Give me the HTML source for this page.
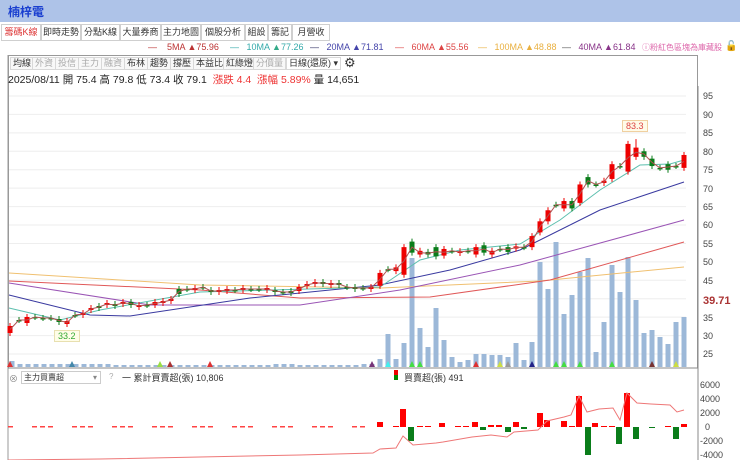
<!DOCTYPE html><html><head><meta charset="utf-8"><style>
*{margin:0;padding:0;box-sizing:border-box}
body{width:740px;height:460px;overflow:hidden;background:#fff;font-family:"Liberation Sans","Noto Sans CJK TC",sans-serif;position:relative}
.top{position:absolute;left:0;top:0;width:740px;height:22px;background:#aec3e8}
.top span{position:absolute;left:8px;top:3px;color:#1a3fd0;font-weight:bold;font-size:12px}
.tabs{position:absolute;left:0;top:22px;width:740px;height:20px;background:#fff}
.tab{position:absolute;top:2px;height:17px;border:1px solid #cfcfcf;font-size:9px;line-height:15px;text-align:center;color:#333;background:#fff}
.leg{position:absolute;top:42px;font-size:9px;white-space:nowrap}
.tb{position:absolute;top:57px;height:13px;border:1px solid #d8d8d8;font-size:9px;line-height:11px;padding:0 2px;color:#333;background:#f8f8f8}
.tb.g{color:#aaa}
.info{position:absolute;left:8px;top:72px;font-size:10.5px;color:#222;white-space:nowrap}
.ax{position:absolute;left:703px;font-size:9px;color:#444}
.ax2{position:absolute;font-size:9px;color:#444;left:700px}
</style></head><body>
<div class="top"><span>楠梓電</span></div>
<div class="tabs">
<div class="tab" style="left:1px;width:40px;color:#d33">籌碼K線</div>
<div class="tab" style="left:41px;width:40px">即時走勢</div>
<div class="tab" style="left:81px;width:39px">分點K線</div>
<div class="tab" style="left:120px;width:41px">大量券商</div>
<div class="tab" style="left:161px;width:40px">主力地圖</div>
<div class="tab" style="left:201px;width:44px">個股分析</div>
<div class="tab" style="left:245px;width:23px">組設</div>
<div class="tab" style="left:268px;width:24px">籌記</div>
<div class="tab" style="left:292px;width:38px">月營收</div>
</div>
<div class="leg" style="left:148px;color:#b33">—&nbsp;&nbsp;&nbsp; 5MA ▲75.96</div>
<div class="leg" style="left:230px;color:#3aa">—&nbsp;&nbsp; 10MA <span style="color:#3a8">▲</span>77.26</div>
<div class="leg" style="left:310px;color:#336">—&nbsp;&nbsp; <span style="color:#44a">20MA ▲71.81</span></div>
<div class="leg" style="left:395px;color:#d44">—&nbsp;&nbsp; 60MA ▲55.56</div>
<div class="leg" style="left:478px;color:#e9b040">—&nbsp;&nbsp; 100MA ▲48.88</div>
<div class="leg" style="left:562px;color:#555">—&nbsp;&nbsp; <span style="color:#838">40MA ▲61.84</span></div>
<div class="leg" style="left:642px;color:#d6a;font-size:8px">ⓘ粉紅色區塊為庫藏股</div>
<div class="leg" style="left:725px;top:41px;font-size:10px">🔓</div>
<div style="position:absolute;left:8px;top:55px;width:690px;height:313px;border:1px solid #999;border-bottom:none"></div>
<div class="tb" style="left:10px">均線</div><div class="tb g" style="left:32px">外資</div><div class="tb g" style="left:55px">投信</div><div class="tb g" style="left:78px">主力</div><div class="tb g" style="left:101px">融資</div><div class="tb" style="left:124px">布林</div><div class="tb" style="left:147px">趨勢</div><div class="tb" style="left:170px">撐壓</div><div class="tb" style="left:193px">本益比</div><div class="tb" style="left:223px">紅綠燈</div><div class="tb g" style="left:253px">分價量</div>
<div class="tb" style="left:286px;width:55px;background:#fff">日線(還原)&nbsp;▾</div>
<div style="position:absolute;left:344px;top:55px;font-size:13px;color:#333">⚙</div>
<div class="info">2025/08/11 開 75.4 高 79.8 低 73.4 收 79.1 &nbsp;<span style="color:#e33">漲跌 4.4 &nbsp;漲幅 5.89%</span> 量 14,651</div>
<svg id="sv" width="740" height="460" style="position:absolute;left:0;top:0"></svg>
<div class="ax" style="top:91px">95</div><div class="ax" style="top:110px">90</div><div class="ax" style="top:128px">85</div><div class="ax" style="top:147px">80</div><div class="ax" style="top:165px">75</div><div class="ax" style="top:184px">70</div><div class="ax" style="top:202px">65</div><div class="ax" style="top:220px">60</div><div class="ax" style="top:239px">55</div><div class="ax" style="top:257px">50</div><div class="ax" style="top:276px">45</div><div class="ax" style="top:313px">35</div><div class="ax" style="top:331px">30</div><div class="ax" style="top:349px">25</div>
<div class="ax" style="top:295px;font-size:11px;color:#a33;font-weight:bold">39.71</div>
<div style="position:absolute;left:622px;top:120px;border:1px solid #f0d0a0;background:#fffbe8;color:#d44;font-size:9px;padding:0 3px">83.3</div>
<div style="position:absolute;left:54px;top:330px;border:1px solid #e8e0b0;background:#fffde8;color:#3a3;font-size:9px;padding:0 3px">33.2</div>
<div style="position:absolute;left:9px;top:372px;font-size:9px;color:#888">⊗</div>
<div style="position:absolute;left:21px;top:371px;width:80px;height:13px;border:1px solid #ccc;font-size:8px;line-height:11px;padding-left:2px;color:#333">主力買賣超<span style="float:right;padding-right:3px;color:#888">▾</span></div>
<div style="position:absolute;left:109px;top:372px;font-size:8px;color:#aaa">?</div>
<div style="position:absolute;left:122px;top:371px;font-size:9px;color:#333">一 累計買賣超(張) 10,806</div>
<div style="position:absolute;left:394px;top:370px;width:4px;height:5px;background:#e00"></div><div style="position:absolute;left:394px;top:375px;width:4px;height:5px;background:#080"></div>
<div style="position:absolute;left:404px;top:371px;font-size:9px;color:#333">買賣超(張) 491</div>
<div class="ax2" style="top:380px">6000</div><div class="ax2" style="top:394px">4000</div><div class="ax2" style="top:408px">2000</div><div class="ax2" style="top:422px;left:705px">0</div><div class="ax2" style="top:436px">-2000</div><div class="ax2" style="top:450px">-4000</div>
<script>
var s='';function Y(p){return 96+(95-p)*3.686}
for(var p=95;p>=25;p-=5)s+='<line x1="9" x2="686" y1="'+Y(p)+'" y2="'+Y(p)+'" stroke="#eee"/>';
s+='<line x1="698" x2="698" y1="86" y2="460" stroke="#888"/><line x1="8" x2="8" y1="55" y2="460" stroke="#999"/><line x1="8" x2="698" y1="368" y2="368" stroke="#888"/>';
var vl=[[380,359],[388,334],[396,359],[404,343],[412,258],[420,328],[428,347],[436,308],[444,340],[452,357],[460,362],[468,360],[476,354],[484,354],[492,355],[500,355],[508,357],[516,343],[524,360],[532,342],[540,262],[548,289],[556,242],[564,314],[572,295],[580,272],[588,258],[596,352],[604,322],[612,265],[620,292],[628,257],[636,300],[644,333],[652,330],[660,337],[668,344],[676,322],[684,317]];
for(var x=12;x<380;x+=8){var h=(x<110||x>270&&x<300||x>360)?2+((x*7)%4):1;if(x<20)h=5;vl.push([x,366-h]);}
vl.forEach(function(v){s+='<rect x="'+(v[0]-2.5)+'" y="'+v[1]+'" width="5" height="'+(367-v[1])+'" fill="#9cb8d8"/>'});
function pl(pts,c){s+='<polyline fill="none" stroke="'+c+'" stroke-width="1" points="'+pts+'"/>'}
pl('9,273 200,285 380,288 540,281 684,267','#f0c070');
pl('9,281 200,290 300,298 430,297 550,280 684,242','#e05858');
pl('9,283 150,305 300,305 400,290 520,265 684,220','#9a55b5');
pl('9,295 90,315 130,316 250,298 380,285 450,270 520,250 600,210 684,182','#3a3aa0');
pl('9,308 60,320 100,310 200,292 380,287 420,260 460,250 520,244 560,220 600,190 640,165 670,164 684,160','#5cbfae');
var L=[[10,326,333,'r'],[19,320,320,'x'],[27,317,323,'r'],[35,317,317,'x'],[43,318,318,'x'],[51,318,318,'x'],[59,319,322,'g'],[67,321,324,'r'],[75,315,315,'x'],[83,313,315,'r'],[91,308,310,'r'],[99,306,308,'g'],[107,303,305,'r'],[115,304,306,'g'],[123,302,304,'r'],[131,302,305,'g'],[139,305,307,'r'],[147,305,305,'x'],[155,302,305,'r'],[163,301,303,'r'],[171,299,301,'r'],[179,289,294,'g'],[187,289,289,'x'],[195,288,290,'r'],[203,287,287,'x'],[211,290,292,'g'],[219,290,292,'r'],[227,289,291,'r'],[235,290,290,'x'],[243,288,290,'r'],[251,289,289,'x'],[259,289,289,'x'],[267,288,290,'r'],[275,290,292,'g'],[283,292,292,'x'],[291,291,293,'g'],[299,287,291,'r'],[307,284,286,'r'],[315,282,284,'r'],[323,282,284,'g'],[331,283,285,'r'],[339,283,285,'g'],[347,287,287,'x'],[355,287,289,'g'],[363,288,288,'x'],[371,287,289,'r']];
var R=[[380,47,43.5,'r'],[388,48,48,'x'],[396,48.5,47.5,'r'],[404,54,46.5,'r'],[412,55.5,52.5,'g'],[420,53,52,'r'],[428,52.7,52,'g'],[436,54,51.5,'g'],[444,53.5,51.7,'r'],[452,53,53,'x'],[460,52.9,52.4,'r'],[468,53,53,'x'],[476,54,52,'r'],[484,54.5,52.5,'g'],[492,53,52,'r'],[500,53.5,53.5,'x'],[508,54,52.7,'g'],[516,54.2,53.6,'r'],[524,54,54,'x'],[532,57,54,'r'],[540,61,58,'r'],[548,64,61,'r'],[556,65.5,65.5,'x'],[564,66.5,64.5,'r'],[572,66.5,64.5,'g'],[580,71,66,'r'],[588,73,71,'g'],[596,71,71,'x'],[604,72,71.4,'r'],[612,76.5,72.5,'r'],[620,76,76,'x'],[628,82,74.5,'r'],[636,81,78.5,'r'],[644,80,78.5,'g'],[652,78,76,'g'],[660,75.5,75.5,'x'],[668,76.5,75,'g'],[676,76,76,'x'],[684,79,75.5,'r']];
R.forEach(function(r){L.push([r[0],Y(r[1]),Y(r[2]),r[3]])});
var cl=[];
L.forEach(function(c){var col=c[3]=='r'?'#e00':'#0a7d1a';
var h=Math.max(c[2]-c[1],1.5);s+='<line x1="'+c[0]+'" x2="'+c[0]+'" y1="'+(c[1]-3)+'" y2="'+(c[2]+3)+'" stroke="'+col+'" stroke-width="1"/>';
s+='<rect x="'+(c[0]-2.5)+'" y="'+c[1]+'" width="5" height="'+h+'" fill="'+col+'"/>';cl.push(c[0]+','+((c[1]+c[2])/2));});
s+='<line x1="636" x2="636" y1="'+Y(83.3)+'" y2="'+Y(81)+'" stroke="#e00"/>';
pl(cl.join(' '),'#b05050');
[[10,'#d33'],[72,'#48a'],[160,'#9d4'],[170,'#a33'],[210,'#d33'],[372,'#737'],[388,'#4ee'],[412,'#4d4'],[420,'#4d4'],[476,'#d33'],[500,'#cd4'],[508,'#999'],[532,'#228'],[556,'#4d4'],[564,'#4d4'],[580,'#4d4'],[612,'#4d4'],[652,'#733'],[676,'#cd4']].forEach(function(t){s+='<polygon points="'+(t[0]-3)+',367 '+(t[0]+3)+',367 '+t[0]+',361" fill="'+t[1]+'"/>'});
var Z=427;
for(var x=10;x<370;x+=8){if((x*13)%5<3)s+='<rect x="'+(x-2)+'" y="'+(Z-1)+'" width="5" height="1.5" fill="#f44"/>'}
// positive = red up, negative = green down (pixels)
var B=[[380,5],[396,1],[403,18],[411,-14],[420,1],[428,1],[442,4],[458,1],[466,1],[475,5],[483,-3],[491,2],[499,2],[508,-5],[516,5],[524,-2],[540,14],[547,7],[564,6],[572,1],[579,31],[588,-28],[595,4],[604,1],[612,1],[619,-17],[627,34],[636,-12],[652,-1],[668,1],[676,-12],[684,3]];
B.forEach(function(b){var v=b[1];s+='<rect x="'+(b[0]-3)+'" y="'+(v>0?Z-v:Z)+'" width="6" height="'+Math.abs(v)+'" fill="'+(v>0?'#f00':'#0a7d1a')+'"/>'});
pl('8,460 100,459 200,457 300,455 373,453 380,449 396,448 403,436 413,445 436,443 443,442 472,437 491,435 507,437 514,432 538,430 547,421 564,417 571,415 579,396 587,412 599,409 613,408 620,420 627,393 637,403 651,404 670,405 677,412 684,410','#e77');
document.getElementById('sv').innerHTML=s;
</script>
</body></html>
